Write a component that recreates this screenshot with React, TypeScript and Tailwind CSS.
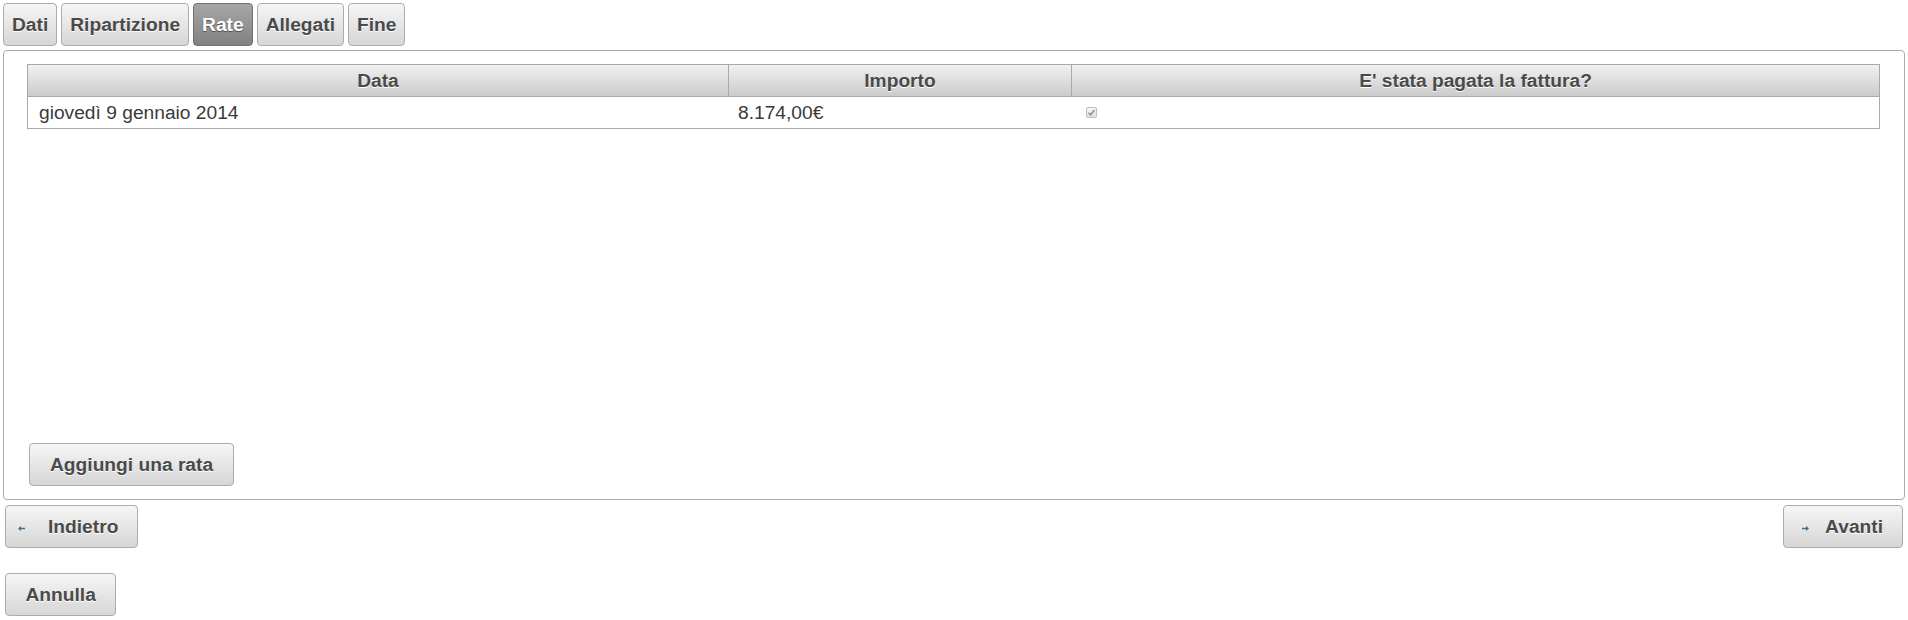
import React from 'react';

const tabs = ['Dati', 'Ripartizione', 'Rate', 'Allegati', 'Fine'];

const btn =
    'h-[43px] flex items-center border border-[#acacac] rounded-[4px] bg-gradient-to-b from-[#f6f6f6] to-[#d6d6d6] text-[#4a4a4a] font-bold [text-shadow:0_1px_0_#ffffff]';

function ArrowLeft() {
    return (
        <svg width="7" height="5" viewBox="0 0 7 5" className="mt-[4px] shrink-0">
            <polygon points="0,2.5 3,0 3,5" fill="#44708b" />
            <rect x="3" y="1.75" width="4" height="1.5" fill="#44708b" />
        </svg>
    );
}

function ArrowRight() {
    return (
        <svg width="7" height="5" viewBox="0 0 7 5" className="mt-[4px] shrink-0">
            <polygon points="7,2.5 4,0 4,5" fill="#44708b" />
            <rect x="0" y="1.75" width="4" height="1.5" fill="#44708b" />
        </svg>
    );
}

export default function App() {
    return (
        <div className="w-[1908px] h-[620px] bg-white font-['Liberation_Sans',Arial,sans-serif] text-[19.2px] leading-[22px]">

            {/* Tabs */}
            <div className="flex gap-[4px] pl-[3px] pt-[3px]">
                {tabs.map((t) => (
                    t === 'Rate' ? (
                        <div
                            key={t}
                            className="h-[43px] flex items-center px-[8px] border border-[#707070] rounded-[4px] bg-gradient-to-b from-[#a6a6a6] to-[#828282] text-white font-bold [text-shadow:0_1px_1px_#4a4a4a]"
                        >
                            {t}
                        </div>
                    ) : (
                        <div key={t} className={btn + ' px-[8px]'}>
                            {t}
                        </div>
                    )
                ))}
            </div>

            {/* Panel */}
            <div className="mt-[4px] ml-[3px] w-[1902px] h-[450px] border border-[#acacac] rounded-[4px] flex flex-col justify-between pl-[23px] pr-[24px] pt-[13px] pb-[13px]">
                <div className="w-full text-[#3a3a3a]">
                    {/* header */}
                    <div className="flex h-[33px] border border-[#a9a9a9] bg-gradient-to-b from-[#f1f1f1] to-[#cbcbcb] text-[#4a4a4a] font-bold [text-shadow:0_1px_0_#ffffff]">
                        <div className="w-[700px] flex items-center justify-center">Data</div>
                        <div className="w-[343px] border-l border-[#a9a9a9] flex items-center justify-center">Importo</div>
                        <div className="flex-1 border-l border-[#a9a9a9] flex items-center justify-center">E' stata pagata la fattura?</div>
                    </div>
                    {/* row */}
                    <div className="flex h-[32px] border-x border-b border-[#a9a9a9]">
                        <div className="w-[700px] flex items-center pl-[11px]">giovedì 9 gennaio 2014</div>
                        <div className="w-[344px] flex items-center pl-[10px]">8.174,00€</div>
                        <div className="flex-1 flex items-center pl-[14px]">
                            <span className="w-[11px] h-[11px] rounded-[2px] border border-[#bdbdbd] bg-gradient-to-b from-[#f7f7f7] to-[#e0e0e0] flex items-center justify-center">
                                <svg width="9" height="9" viewBox="0 0 9 9">
                                    <path d="M1.5 4.8 L3.6 6.8 L7.5 2" stroke="#8e8e8e" strokeWidth="1.5" fill="none" />
                                </svg>
                            </span>
                        </div>
                    </div>
                </div>

                <div className="pl-[2px]">
                    <button type="button" className={btn + ' px-[20px]'}>
                        Aggiungi una rata
                    </button>
                </div>
            </div>

            {/* Navigation */}
            <div className="flex justify-between mt-[5px] pl-[5px] pr-[5px]">
                <button type="button" className={btn + ' pl-[12px] pr-[19px] gap-[23px]'}>
                    <ArrowLeft />
                    Indietro
                </button>
                <button type="button" className={btn + ' pl-[18px] pr-[19px] gap-[16px]'}>
                    <ArrowRight />
                    Avanti
                </button>
            </div>

            <div className="pl-[5px] mt-[25px]">
                <button type="button" className={btn + ' px-[19.5px]'}>
                    Annulla
                </button>
            </div>
        </div>
    );
}
